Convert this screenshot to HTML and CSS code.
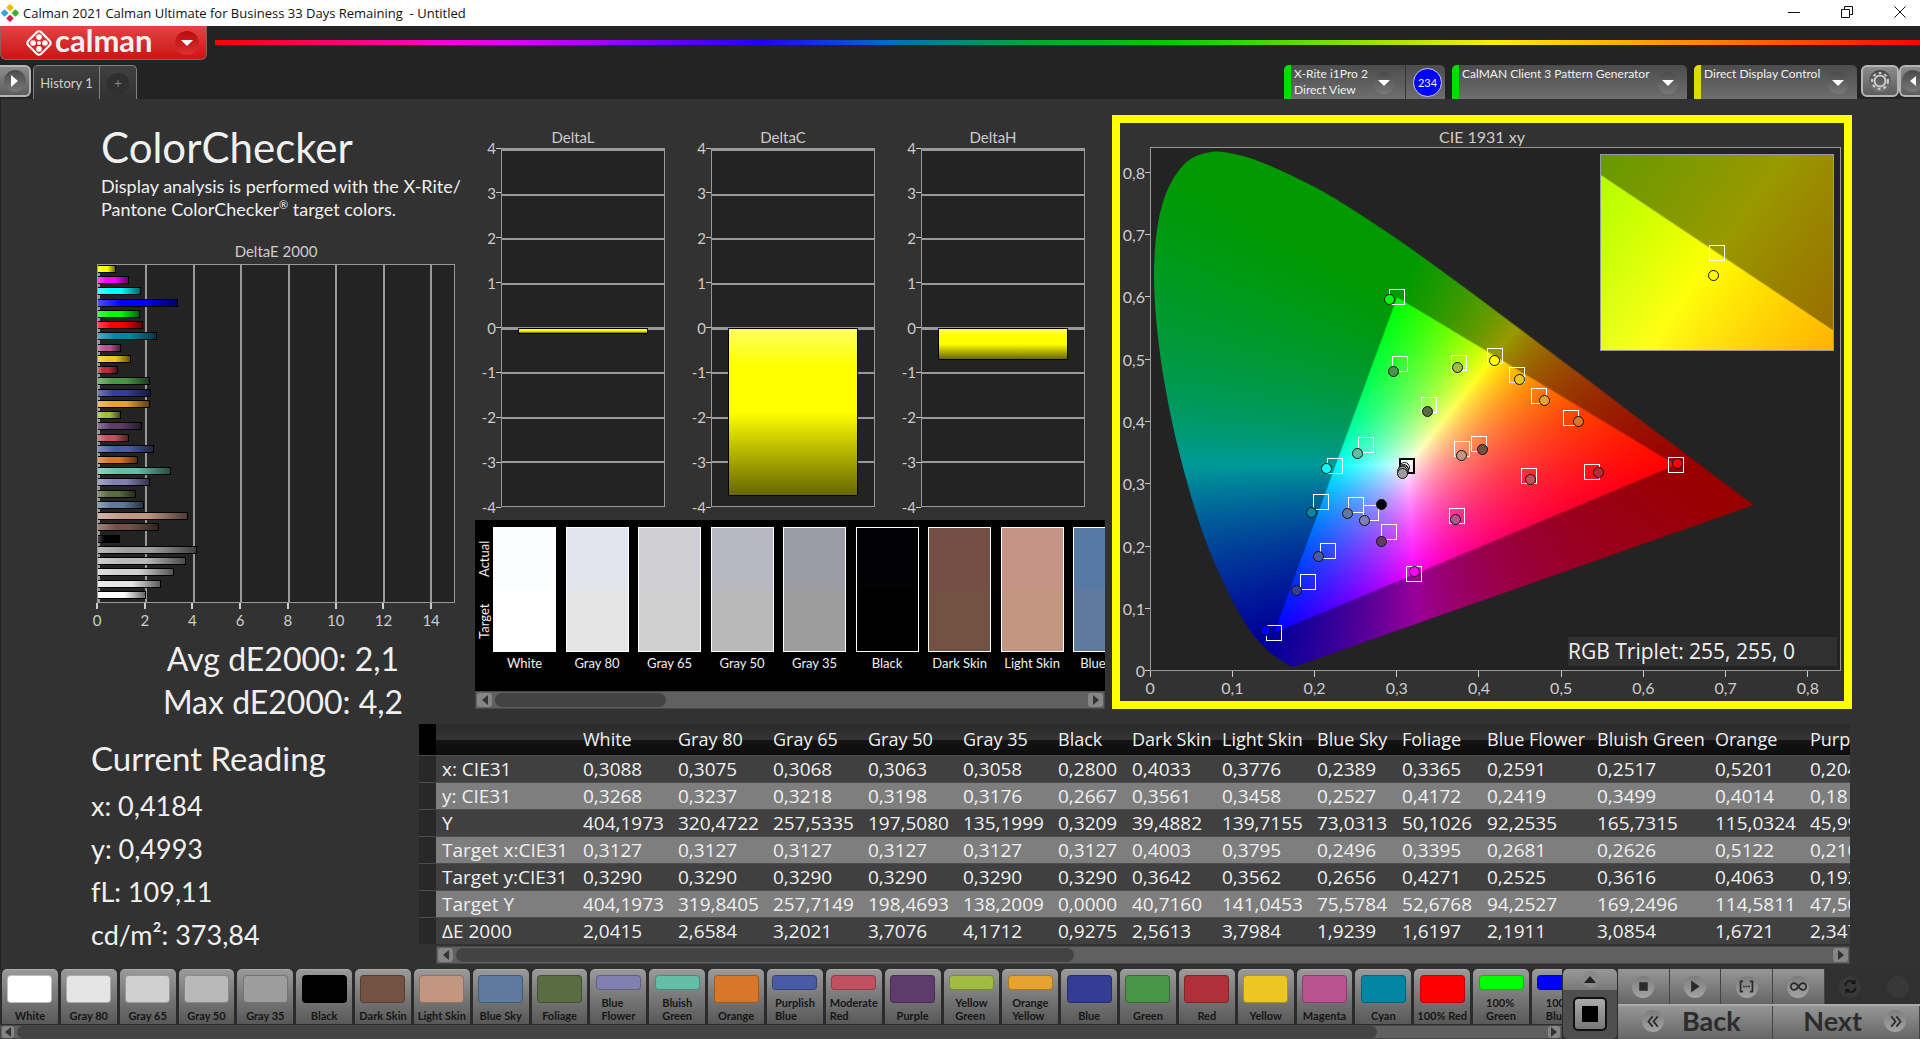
FILE: index.html
```html
<!DOCTYPE html>
<html lang="en">
  <head>
    <meta charset="UTF-8" />
    <meta name="viewport" content="width=device-width, initial-scale=1.0" />
    <title>Calman 2021 - Untitled</title>
    <link rel="stylesheet" href="styles.css">
  </head>
  <body>
    <div class="title_bar">
      <svg class="app_icon" viewBox="0 0 20 20">
        <rect x="7" y="1" width="6" height="6" rx="1" fill="#f5b800" transform="rotate(45 10 4)" />
        <rect x="1" y="7" width="6" height="6" rx="1" fill="#3aa5dc" transform="rotate(45 4 10)" />
        <rect x="13" y="7" width="6" height="6" rx="1" fill="#3fae2a" transform="rotate(45 16 10)" />
        <rect x="7" y="13" width="6" height="6" rx="1" fill="#d81e4a" transform="rotate(45 10 16)" />
      </svg>
      <span class="window_title">Calman 2021 Calman Ultimate for Business 33 Days Remaining &nbsp;- Untitled</span>
      <button class="window_button" aria-label="Minimize">
        <svg viewBox="0 0 12 12"><path d="M0 6.5h12" /></svg>
      </button>
      <button class="window_button" aria-label="Restore">
        <svg viewBox="0 0 12 12"><path d="M.5 3.5h8v8h-8zM3.5 3V.5h8v8H9" /></svg>
      </button>
      <button class="window_button" aria-label="Close">
        <svg viewBox="0 0 12 12"><path d="M.5.5l11 11M11.5.5l-11 11" /></svg>
      </button>
    </div>

    <header class="brand_row">
      <button class="brand">
        <svg class="brand_mark" viewBox="0 0 26 26">
          <rect x="4.500" y="4.500" width="17" height="17" rx="3" transform="rotate(45 13 13)" />
          <circle cx="13" cy="7.500" r="2.600" />
          <circle cx="7.500" cy="13" r="2.600" />
          <circle cx="18.500" cy="13" r="2.600" />
          <circle cx="13" cy="18.500" r="2.600" />
          <circle cx="13" cy="13" r="1.900" />
        </svg>
        <span class="brand_name">calman</span>
        <span class="brand_arrow"><i class="arrow_down"></i></span>
      </button>
      <div class="rainbow"></div>
    </header>

    <nav class="tab_row">
      <button class="side_button side_left" aria-label="Open panel"><span class="round"><i class="arrow_right"></i></span></button>
      <div class="tabs">
        <button class="tab">History 1</button>
        <button class="tab tab_add" aria-label="Add tab"><span>+</span></button>
      </div>
      <div class="devices">
        <div class="device device_meter">
          <button class="device_name green">X-Rite i1Pro 2<br />Direct View</button>
          <span class="round"><i class="arrow_down"></i></span>
          <button class="meter_count"><span>234</span></button>
        </div>
        <div class="device device_source">
          <button class="device_name green">CalMAN Client 3 Pattern Generator</button>
          <span class="round"><i class="arrow_down"></i></span>
        </div>
        <div class="device device_display">
          <button class="device_name yellow">Direct Display Control</button>
          <span class="round"><i class="arrow_down"></i></span>
        </div>
      </div>
      <button class="side_button" aria-label="Settings">
        <span class="round">
          <svg class="gear" viewBox="0 0 20 20">
            <circle cx="10" cy="10" r="5.500" />
            <circle class="teeth" cx="10" cy="10" r="8" />
          </svg>
        </span>
      </button>
      <button class="side_button side_right" aria-label="Close panel"><span class="round"><i class="arrow_left"></i></span></button>
    </nav>

    <main>
      <div class="analysis">
        <section class="summary">
          <h1>ColorChecker</h1>
          <p class="description">Display analysis is performed with the X-Rite/<br />Pantone ColorChecker<sup>®</sup> target colors.</p>
          <h2 class="chart_title">DeltaE 2000</h2>
          <div class="de_plot" id="dePlot"></div>
          <div class="de_axis">
            <span>0</span><span>2</span><span>4</span><span>6</span><span>8</span><span>10</span><span>12</span><span>14</span>
          </div>
          <p class="totals">Avg dE2000: 2,1<br />Max dE2000: 4,2</p>
        </section>

        <section class="middle">
          <div class="deltas" id="deltas"></div>
          <div class="compare">
            <div class="compare_body">
              <div class="compare_side"><span>Actual</span><span>Target</span></div>
              <div class="compare_list" id="compareList"></div>
            </div>
            <div class="scrollbar">
              <button aria-label="Scroll left"><i class="arrow_left"></i></button>
              <div class="track"><div class="thumb thumb_compare"></div></div>
              <button aria-label="Scroll right"><i class="arrow_right"></i></button>
            </div>
          </div>
        </section>

        <section class="cie">
          <h2 class="chart_title">CIE 1931 xy</h2>
          <div class="cie_chart">
            <div class="cie_y">
              <span>0,8</span><span>0,7</span><span>0,6</span><span>0,5</span><span>0,4</span><span>0,3</span><span>0,2</span><span>0,1</span><span>0</span>
            </div>
            <div class="cie_plot" id="ciePlot">
              <canvas id="cieCanvas" width="690" height="523"></canvas>
              <div class="cie_inset" id="cieInset">
                <canvas id="insetCanvas" width="230" height="194"></canvas>
              </div>
              <div class="triplet">RGB Triplet: 255, 255, 0</div>
            </div>
            <div class="cie_x">
              <span>0</span><span>0,1</span><span>0,2</span><span>0,3</span><span>0,4</span><span>0,5</span><span>0,6</span><span>0,7</span><span>0,8</span>
            </div>
          </div>
        </section>
      </div>

      <div class="results">
        <section class="reading">
          <h2>Current Reading</h2>
          <p>x: 0,4184</p>
          <p>y: 0,4993</p>
          <p>fL: 109,11</p>
          <p>cd/m²: 373,84</p>
        </section>

        <section class="data">
          <div class="table_clip">
            <table>
              <colgroup>
                <col class="c_mark"><col class="c_label">
                <col span="5" class="c_gray">
                <col class="c_black"><col class="c_dark"><col class="c_gray">
                <col span="2" class="c_sky">
                <col class="c_flower"><col class="c_bluish">
                <col span="2" class="c_gray">
              </colgroup>
              <thead>
                <tr><th></th><th></th><th>White</th><th>Gray 80</th><th>Gray 65</th><th>Gray 50</th><th>Gray 35</th><th>Black</th><th>Dark Skin</th><th>Light Skin</th><th>Blue Sky</th><th>Foliage</th><th>Blue Flower</th><th>Bluish Green</th><th>Orange</th><th>Purplish Blue</th></tr>
              </thead>
              <tbody>
                <tr><td></td><th>x: CIE31</th><td>0,3088</td><td>0,3075</td><td>0,3068</td><td>0,3063</td><td>0,3058</td><td>0,2800</td><td>0,4033</td><td>0,3776</td><td>0,2389</td><td>0,3365</td><td>0,2591</td><td>0,2517</td><td>0,5201</td><td>0,204</td></tr>
                <tr><td></td><th>y: CIE31</th><td>0,3268</td><td>0,3237</td><td>0,3218</td><td>0,3198</td><td>0,3176</td><td>0,2667</td><td>0,3561</td><td>0,3458</td><td>0,2527</td><td>0,4172</td><td>0,2419</td><td>0,3499</td><td>0,4014</td><td>0,18</td></tr>
                <tr><td></td><th>Y</th><td>404,1973</td><td>320,4722</td><td>257,5335</td><td>197,5080</td><td>135,1999</td><td>0,3209</td><td>39,4882</td><td>139,7155</td><td>73,0313</td><td>50,1026</td><td>92,2535</td><td>165,7315</td><td>115,0324</td><td>45,99</td></tr>
                <tr><td></td><th>Target x:CIE31</th><td>0,3127</td><td>0,3127</td><td>0,3127</td><td>0,3127</td><td>0,3127</td><td>0,3127</td><td>0,4003</td><td>0,3795</td><td>0,2496</td><td>0,3395</td><td>0,2681</td><td>0,2626</td><td>0,5122</td><td>0,210</td></tr>
                <tr><td></td><th>Target y:CIE31</th><td>0,3290</td><td>0,3290</td><td>0,3290</td><td>0,3290</td><td>0,3290</td><td>0,3290</td><td>0,3642</td><td>0,3562</td><td>0,2656</td><td>0,4271</td><td>0,2525</td><td>0,3616</td><td>0,4063</td><td>0,192</td></tr>
                <tr><td></td><th>Target Y</th><td>404,1973</td><td>319,8405</td><td>257,7149</td><td>198,4693</td><td>138,2009</td><td>0,0000</td><td>40,7160</td><td>141,0453</td><td>75,5784</td><td>52,6768</td><td>94,2527</td><td>169,2496</td><td>114,5811</td><td>47,50</td></tr>
                <tr><td></td><th>ΔE 2000</th><td>2,0415</td><td>2,6584</td><td>3,2021</td><td>3,7076</td><td>4,1712</td><td>0,9275</td><td>2,5613</td><td>3,7984</td><td>1,9239</td><td>1,6197</td><td>2,1911</td><td>3,0854</td><td>1,6721</td><td>2,347</td></tr>
              </tbody>
            </table>
          </div>
          <div class="scrollbar scrollbar_table">
            <button aria-label="Scroll left"><i class="arrow_left"></i></button>
            <div class="track"><div class="thumb thumb_table"></div></div>
            <button aria-label="Scroll right"><i class="arrow_right"></i></button>
          </div>
        </section>
      </div>
    </main>

    <footer>
      <div class="patches">
        <div class="patch_list" id="patchList"></div>
        <div class="scrollbar scrollbar_thin">
          <button aria-label="Scroll left"><i class="arrow_left"></i></button>
          <div class="track"><div class="thumb thumb_patches"></div></div>
          <button aria-label="Scroll right"><i class="arrow_right"></i></button>
        </div>
      </div>
      <div class="pattern">
        <button class="pattern_up" aria-label="Show patterns"><span class="round"><i class="arrow_up"></i></span></button>
        <button class="pattern_window" aria-label="Pattern window"><i></i></button>
      </div>
      <div class="transport">
        <div class="transport_row">
          <button aria-label="Stop"><span class="round"><svg viewBox="0 0 20 20"><path d="M5 5h10v10H5z" /></svg></span></button>
          <button aria-label="Play"><span class="round"><svg viewBox="0 0 20 20"><path d="M6 3l10 7-10 7z" /></svg></span></button>
          <button aria-label="Read series"><span class="round"><svg class="line" viewBox="0 0 20 20"><path d="M6 4H3v12h3M14 4h3v12h-3M6 10h2M9 10h2M12 10h2" /></svg></span></button>
          <button aria-label="Continuous"><span class="round"><svg class="line" viewBox="0 0 20 20"><path d="M10 10c-2-3-3-4-5-4a4 4 0 0 0 0 8c2 0 3-1 5-4s3-4 5-4a4 4 0 0 1 0 8c-2 0-3-1-5-4z" /></svg></span></button>
          <button class="off" aria-label="Refresh" disabled><span class="round"><svg class="line" viewBox="0 0 20 20"><path d="M4 9a6 6 0 0 1 11-3M16 11a6 6 0 0 1-11 3M15 2v4h-4M5 18v-4h4" /></svg></span></button>
          <button class="off" aria-label="Record" disabled><span class="round"></span></button>
        </div>
        <div class="step_row">
          <button class="back"><span class="round"><svg class="line" viewBox="0 0 20 20"><path d="M9 4l-5 6 5 6M15 4l-5 6 5 6" /></svg></span>Back</button>
          <button class="next">Next<span class="round"><svg class="line" viewBox="0 0 20 20"><path d="M5 4l5 6-5 6M11 4l5 6-5 6" /></svg></span></button>
        </div>
      </div>
    </footer>

    <script src="script.js"></script>
  </body>
</html>
```
FILE: styles.css
```css
* {
  box-sizing: border-box;
}
body {
  margin: 0;
  min-height: 100vh;
  display: flex;
  flex-direction: column;
  background: #323232;
  color: #f0f0f0;
  font-family: "Lato", sans-serif;
  overflow: hidden;
}
button {
  margin: 0;
  padding: 0;
  border: none;
  background: none;
  color: inherit;
  font: inherit;
  cursor: pointer;
}
h1,
h2,
p {
  margin: 0;
  font-weight: 400;
}

/* arrows */
.arrow_down,
.arrow_up,
.arrow_left,
.arrow_right {
  display: block;
  border: 5px solid transparent;
}
.arrow_down {
  border-width: 6px 6px 0;
  border-top-color: #fff;
}
.arrow_up {
  border-width: 0 6px 7px;
  border-bottom-color: #222;
}
.arrow_left {
  border-width: 5px 6px 5px 0;
  border-right-color: #fff;
}
.arrow_right {
  border-width: 6px 0 6px 7px;
  border-left-color: #fff;
}
.round {
  display: flex;
  flex: none;
  align-items: center;
  justify-content: center;
  width: 22px;
  height: 22px;
  border-radius: 50%;
  background: linear-gradient(#4a4a4a, #787878);
}

/* title bar */
.title_bar {
  display: flex;
  align-items: center;
  height: 26px;
  background: #fff;
  color: #111;
  font-family: "Open Sans", sans-serif;
  font-size: 13px;
}
.app_icon {
  width: 18px;
  height: 18px;
  margin: 0 4px 0 1px;
}
.window_title {
  flex: 1;
}
.window_button {
  width: 53px;
  height: 26px;
}
.window_button:last-child {
  width: 40px;
  margin-left: 7px;
}
.window_button svg {
  width: 12px;
  height: 12px;
  fill: none;
  stroke: #111;
}

/* brand */
.brand_row {
  display: flex;
  height: 39px;
  background: #232323;
}
.brand {
  display: flex;
  align-items: center;
  width: 207px;
  height: 34px;
  padding: 0 7px 0 24px;
  border: 1px solid #8a6060;
  border-top: none;
  border-radius: 0 0 6px 6px;
  background: linear-gradient(#e24444, #cc1414);
}
.brand_mark {
  width: 28px;
  height: 28px;
  fill: #fff;
}
.brand_mark rect {
  fill: none;
  stroke: #fff;
  stroke-width: 2;
}
.brand_name {
  flex: 1;
  padding: 0 0 6px 2px;
  font-size: 31px;
  font-weight: 700;
  line-height: 28px;
  text-align: left;
}
.brand_arrow {
  display: flex;
  align-items: center;
  justify-content: center;
  width: 24px;
  height: 24px;
  border-radius: 50%;
  background: linear-gradient(#b80c0c, #dc3030);
}
.rainbow {
  flex: 1;
  height: 5px;
  margin: 14px 0 0 8px;
  background: linear-gradient(to right, #f00, #f0c 13%, #d0f 18%, #20f 32%, #06c 39%, #0a3 48%, #0c0 56%, #6d0 64%, #fe0 75%, #f80 87%, #f00);
}

/* tabs */
.tab_row {
  display: flex;
  align-items: flex-start;
  height: 34px;
  background: #232323;
}
.side_button {
  display: flex;
  align-items: center;
  justify-content: center;
  width: 38px;
  height: 32px;
  border: 2px solid #b4b4b4;
  border-radius: 6px;
  background: linear-gradient(#8c8c8c, #5c5c5c);
}
.side_left {
  width: 31px;
  border-left: none;
  border-radius: 0 6px 6px 0;
}
.side_right {
  width: 21px;
  border-right: none;
  border-radius: 6px 0 0 6px;
  overflow: hidden;
}
.side_right .round {
  margin-left: 5px;
}
.tabs {
  display: flex;
  height: 34px;
  margin-left: 2px;
  border: 1px solid #808080;
  border-bottom: none;
  border-radius: 5px 5px 0 0;
  background: linear-gradient(#404040, #323232);
}
.tab {
  width: 65px;
  color: #d0d0d0;
  font-size: 13px;
}
.tab_add {
  width: 37px;
  border-left: 1px solid #808080;
}
.tab_add span {
  display: block;
  width: 22px;
  height: 22px;
  margin: 3px auto 0;
  border-radius: 50%;
  background: #303030;
  color: #888;
  line-height: 20px;
}
.devices {
  display: flex;
  flex: 1;
  justify-content: flex-end;
  gap: 7px;
  margin-right: 4px;
}
.device {
  display: flex;
  height: 34px;
  padding-right: 8px;
  border-radius: 5px 5px 0 0;
  background: linear-gradient(#4c4c4c, #6e6e6e);
  overflow: hidden;
}
.device_meter {
  width: 161px;
  padding-right: 3px;
}
.device_source {
  width: 235px;
}
.device_display {
  width: 163px;
}
.device_name {
  flex: 1;
  padding: 1px 0 0 3px;
  border-left: 7px solid #0d0;
  font-size: 12px;
  line-height: 16px;
  text-align: left;
  white-space: nowrap;
  align-self: stretch;
  display: flex;
}
.device_name.yellow {
  border-left-color: #dd0;
}
.device .round {
  align-self: center;
  margin-top: 1px;
}
.meter_count {
  margin-left: 10px;
  padding-left: 7px;
  border-left: 1px solid #333;
}
.meter_count span {
  display: block;
  width: 29px;
  height: 29px;
  border: 1px solid #ccd;
  border-radius: 50%;
  background: #00f;
  font-size: 11px;
  line-height: 27px;
}
.gear {
  width: 20px;
  height: 20px;
  fill: none;
  stroke: #ccc;
  stroke-width: 2;
}
.gear .teeth {
  stroke-width: 2;
  stroke-dasharray: 3 3;
}

/* main area */
main {
  flex: 1;
  border-left: 1px solid #222;
}
.analysis {
  display: grid;
  grid-template-columns: minmax(0, 474fr) minmax(0, 637fr) minmax(0, 740fr);
  height: 625px;
  padding-right: 68px;
}
.chart_title {
  color: #ccc;
  font-size: 15px;
  line-height: 20px;
  text-align: center;
}
.summary {
  padding: 21px 20px 0 96px;
}
.summary h1 {
  padding-left: 4px;
  font-size: 42px;
  line-height: 54px;
}
.description {
  padding: 1px 0 20px 4px;
  font-size: 18px;
  line-height: 23px;
  white-space: nowrap;
}
.description sup {
  font-size: 11px;
  line-height: 0;
}
.summary .chart_title {
  height: 23px;
}
.de_plot {
  display: grid;
  grid-auto-rows: 1fr;
  align-items: start;
  height: 339px;
  border: 1px solid #999;
  background: repeating-linear-gradient(to right, #999 0 2px, #232323 2px 13.333%);
}
.de_bar {
  height: 8px;
  border: 1px solid #000;
  border-left: none;
  background-image: linear-gradient(to right, rgba(255, 255, 255, 0.3), transparent 30%, transparent 55%, rgba(0, 0, 0, 0.6));
}
.de_axis {
  display: grid;
  grid-template-columns: repeat(8, 1fr);
  margin-left: -6.667%;
  color: #ccc;
  font-size: 15px;
  line-height: 22px;
  text-align: center;
}
.de_axis span::before {
  content: "";
  display: block;
  width: 2px;
  height: 6px;
  margin: 0 auto;
  background: #ccc;
}
.totals {
  padding: 6px 0 0 14px;
  font-size: 32px;
  line-height: 43px;
  text-align: center;
}

.middle {
  padding-right: 7px;
}
.deltas {
  display: grid;
  grid-template-columns: repeat(3, 1fr);
  gap: 26px;
  padding: 28px 20px 0 6px;
}
.delta_body {
  display: flex;
}
.delta_axis {
  display: flex;
  flex-direction: column;
  justify-content: space-between;
  width: 20px;
  height: 379px;
  margin-bottom: -10px;
  color: #ccc;
  font-size: 15px;
  line-height: 20px;
}
.delta_axis span {
  display: flex;
  align-items: center;
  justify-content: flex-end;
}
.delta_axis span::after {
  content: "";
  width: 5px;
  height: 1px;
  background: #ccc;
}
.delta_title {
  height: 11px;
  line-height: 20px;
}
.delta_plot {
  flex: 1;
  height: 359px;
  margin-top: 10px;
  border: 1px solid #999;
  background: repeating-linear-gradient(#999 0 2px, #232323 2px 12.5%);
}
.delta_plot::before {
  content: "";
  display: block;
  height: 50%;
}
.delta_bar {
  width: 80%;
  margin: 0 auto;
  border: 1px solid #000;
  background: linear-gradient(#ff6, #ff0 22%, #ff0 50%, #660);
}

.compare {
  margin-top: 13px;
}
.compare_body {
  display: flex;
  height: 171px;
  background: #000;
}
.compare_side {
  display: flex;
  flex-direction: row-reverse;
  justify-content: space-around;
  width: 18px;
  height: 125px;
  margin-top: 7px;
  font-size: 13px;
  writing-mode: vertical-rl;
  transform: rotate(180deg);
  line-height: 18px;
}
.compare_list {
  display: flex;
  flex: 1;
  gap: 1.55%;
  padding-top: 7px;
  overflow: hidden;
}
.compare_item {
  flex: 0 0 10.3%;
  font-size: 13px;
  line-height: 22px;
  text-align: center;
  white-space: nowrap;
}
.compare_color {
  height: 125px;
  border: 1px solid #fff;
}

.scrollbar {
  display: flex;
  align-items: center;
  height: 18px;
  padding: 0 1px;
  border: 1px solid #484848;
  background: #606060;
}
.scrollbar button {
  display: flex;
  align-items: center;
  justify-content: center;
  width: 15px;
  height: 14px;
  border-radius: 3px;
  background: #868686;
}
.scrollbar .arrow_left {
  border-width: 5px 6px 5px 0;
  border-right-color: #333;
}
.scrollbar .arrow_right {
  border-width: 5px 0 5px 6px;
  border-left-color: #333;
}
.track {
  flex: 1;
  padding: 0 3px;
}
.thumb {
  height: 14px;
  border-radius: 7px;
  background: #434343;
}
.thumb_compare {
  width: 29%;
}
.thumb_table {
  width: 45%;
}
.thumb_patches {
  width: 89%;
}

.cie {
  margin: 16px 0 15px;
  padding-top: 4px;
  border: 8px solid #ff0;
}
.cie .chart_title {
  font-size: 16px;
}
.cie_chart {
  display: grid;
  grid-template-columns: 30px 1fr;
  padding-right: 3px;
}
.cie_y {
  display: grid;
  grid-auto-rows: 1fr;
  align-items: center;
  margin: -6px 0 -31px;
  color: #ccc;
  font-size: 16px;
  text-align: right;
}
.cie_y span {
  display: flex;
  align-items: center;
  justify-content: flex-end;
}
.cie_y span::after {
  content: "";
  width: 5px;
  height: 1px;
  background: #ccc;
}
.cie_plot {
  position: relative;
  height: 524px;
  border: 1px solid #999;
  background: #232323;
}
.cie_plot canvas {
  display: block;
  width: 100%;
  height: 100%;
}
.cie_x {
  grid-column: 2;
  display: grid;
  grid-template-columns: repeat(9, 1fr);
  margin: 0 -8px 0 -41px;
  color: #ccc;
  font-size: 16px;
  line-height: 22px;
  text-align: center;
}
.cie_x span::before {
  content: "";
  display: block;
  width: 1px;
  height: 6px;
  margin: 0 auto;
  background: #ccc;
}
.marker_target,
.marker_actual {
  position: absolute;
  width: 16px;
  height: 16px;
  margin: -8px;
  border: 1px solid #fff;
}
.marker_target.black {
  border: 2px solid #000;
}
.marker_actual {
  width: 11px;
  height: 11px;
  margin: -5px;
  border: 1px solid #111;
  border-radius: 50%;
}
.cie_inset {
  position: absolute;
  top: 6px;
  right: 6px;
  width: 34%;
  height: 197px;
  border: 1px solid #999;
}
.triplet {
  position: absolute;
  right: 3px;
  bottom: 4px;
  width: 269px;
  background: #303030;
  font-family: "Open Sans", sans-serif;
  font-size: 21px;
  line-height: 29px;
}

/* readings and table */
.results {
  display: flex;
  height: 245px;
  padding-right: 70px;
}
.reading {
  width: 418px;
  padding: 13px 0 0 90px;
  font-size: 27px;
  line-height: 43px;
}
.reading h2 {
  padding-bottom: 4px;
  font-size: 33px;
  line-height: 43px;
}
.data {
  flex: 1;
  min-width: 0;
}
.table_clip {
  overflow: hidden;
}
table {
  width: 1480px;
  border-collapse: collapse;
  table-layout: fixed;
  font-family: "Open Sans", sans-serif;
  font-size: 19px;
  line-height: 26px;
}
th,
td {
  height: 27px;
  padding: 0 6px;
  font-weight: 400;
  text-align: left;
  white-space: nowrap;
}
thead th {
  height: 31px;
  font-size: 18px;
  background: linear-gradient(#2a2a2a, #343434 50%, #141414 50%, #0c0c0c);
}
thead th:first-child {
  background: #000;
}
tbody tr {
  background: #404040;
  border-top: 1px solid #4c4c4c;
}
tbody tr:nth-child(even) {
  background: #7e7e7e;
}
tbody td:first-child {
  background: #282828;
}
.c_mark {
  width: 17px;
}
.c_label {
  width: 141px;
}
.c_gray {
  width: 95px;
}
.c_black {
  width: 74px;
}
.c_dark {
  width: 90px;
}
.c_sky {
  width: 85px;
}
.c_flower {
  width: 110px;
}
.c_bluish {
  width: 118px;
}
.scrollbar_table {
  margin: 2px 0 0 17px;
}

/* bottom bar */
footer {
  display: flex;
  height: 70px;
  background: #2c2c2c;
}
.patches {
  flex: 1;
  min-width: 0;
}
.patch_list {
  display: flex;
  gap: 3px;
  height: 56px;
  padding-left: 2px;
  overflow: hidden;
}
.patch {
  display: flex;
  flex: 0 0 3.58%;
  flex-direction: column;
  align-items: center;
  height: 55px;
  padding: 5px 0 2px;
  border-top: 1px solid #aaa;
  border-radius: 5px 5px 0 0;
  background: linear-gradient(#999, #585858);
  color: #161616;
  font-size: 11px;
  font-weight: 700;
  line-height: 13px;
  white-space: nowrap;
}
.patch_color {
  flex: 1;
  width: 45px;
  margin-bottom: 6px;
  border-radius: 4px;
  border: 1px solid rgba(0, 0, 0, 0.25);
}
.patch_name {
  display: block;
  text-align: left;
}
.scrollbar_thin {
  height: 14px;
}
.scrollbar_thin button {
  width: 12px;
  height: 12px;
}
.scrollbar_thin .thumb {
  height: 12px;
}
.pattern {
  display: flex;
  flex-direction: column;
  align-items: center;
  width: 54px;
  margin: 0 1px;
  background: #4e4e4e;
  border-radius: 5px;
}
.pattern_up {
  width: 100%;
  height: 21px;
  border-radius: 5px 5px 0 0;
  background: linear-gradient(#999, #777);
}
.pattern_up .round {
  width: 17px;
  height: 17px;
  margin: 0 auto;
  background: #8a8a8a;
}
.pattern_window {
  display: flex;
  align-items: center;
  justify-content: center;
  width: 34px;
  height: 34px;
  margin-top: 7px;
  border: 2px solid #111;
  border-radius: 5px;
  background: linear-gradient(#aaa, #777);
}
.pattern_window i {
  width: 16px;
  height: 16px;
  background: #000;
}
.transport {
  width: 302px;
}
.transport_row {
  display: grid;
  grid-template-columns: repeat(5, 52fr) 44fr;
  height: 35px;
}
.transport_row button,
.step_row button {
  display: flex;
  align-items: center;
  justify-content: center;
  border-right: 1px solid #444;
  background: linear-gradient(#969696, #666);
}
.transport_row .off {
  border: none;
  background: #303030;
}
.transport .round {
  background: linear-gradient(#7c7c7c, #a4a4a4);
}
.transport .off .round {
  background: #383838;
}
.transport svg {
  width: 17px;
  height: 17px;
  fill: #2a2a2a;
}
.transport svg.line {
  fill: none;
  stroke: #2a2a2a;
  stroke-width: 2;
}
.transport .off svg {
  stroke: #161616;
}
.step_row {
  display: grid;
  grid-template-columns: 155fr 147fr;
  height: 35px;
  border-top: 2px solid #aaa;
  color: #2c2c2c;
  font-size: 27px;
  font-weight: 700;
}
.step_row button {
  line-height: 28px;
  padding-bottom: 3px;
}
.step_row .back {
  justify-content: flex-start;
  gap: 18px;
  padding-left: 24px;
}
.step_row .next {
  justify-content: flex-end;
  gap: 22px;
  padding-right: 13px;
}
```
FILE: script.js
```js
// name, color, measured color, deltaE, target x/y, actual x/y
const patches = [
  ["White", "#ffffff", "#fafeff", 2.04, 0.3127, 0.329, 0.3088, 0.3268],
  ["Gray 80", "#e5e5e5", "#e2e5ee", 2.66, 0.3127, 0.329, 0.3075, 0.3237],
  ["Gray 65", "#d0d0d0", "#cfcfd4", 3.2, 0.3127, 0.329, 0.3068, 0.3218],
  ["Gray 50", "#b9b9b9", "#b8b8c2", 3.71, 0.3127, 0.329, 0.3063, 0.3198],
  ["Gray 35", "#9d9d9d", "#9c9ca6", 4.17, 0.3127, 0.329, 0.3058, 0.3176],
  ["Black", "#000000", "#020204", 0.93, 0.3127, 0.329, 0.28, 0.2667],
  ["Dark Skin", "#735244", "#754f45", 2.56, 0.4003, 0.3642, 0.4033, 0.3561],
  ["Light Skin", "#c39682", "#c69486", 3.8, 0.3795, 0.3562, 0.3776, 0.3458],
  ["Blue Sky", "#5e7b9d", "#567aa4", 1.92, 0.2496, 0.2656, 0.2389, 0.2527],
  ["Foliage", "#596c42", "#586c46", 1.62, 0.3395, 0.4271, 0.3365, 0.4172],
  ["Blue<br>Flower", "#8280b1", "#7d80b5", 2.19, 0.2681, 0.2525, 0.2591, 0.2419],
  ["Bluish<br>Green", "#63bda7", "#5fbdae", 3.09, 0.2626, 0.3616, 0.2517, 0.3499],
  ["Orange", "#d97728", "#dc742c", 1.67, 0.5122, 0.4063, 0.5201, 0.4014],
  ["Purplish<br>Blue", "#4a5ba5", "#445bac", 2.35, 0.2156, 0.1917, 0.203, 0.183],
  ["Moderate<br>Red", "#c25160", "#c64f62", 1.3, 0.4613, 0.3127, 0.4625, 0.3078],
  ["Purple", "#5d3c6b", "#5c3b70", 1.85, 0.29, 0.222, 0.2805, 0.208],
  ["Yellow<br>Green", "#a0bc41", "#9fbc45", 0.95, 0.375, 0.4945, 0.3727, 0.488],
  ["Orange<br>Yellow", "#e6a32d", "#e8a230", 2.2, 0.4726, 0.441, 0.4787, 0.4338],
  ["Blue", "#333d95", "#2d3d9b", 2.25, 0.191, 0.1417, 0.1766, 0.129],
  ["Green", "#489548", "#46954d", 2.2, 0.304, 0.492, 0.2948, 0.4807],
  ["Red", "#af3038", "#b32e39", 0.85, 0.5375, 0.318, 0.545, 0.318],
  ["Yellow", "#ecc723", "#edc62a", 1.4, 0.4466, 0.475, 0.4486, 0.469],
  ["Magenta", "#b85390", "#bb5193", 0.95, 0.3727, 0.248, 0.371, 0.2435],
  ["Cyan", "#0386a3", "#0086a9", 2.5, 0.207, 0.271, 0.1945, 0.255],
  ["100% Red", "#ff0000", "#ff0000", 1.9, 0.64, 0.33, 0.6407, 0.333],
  ["100%<br>Green", "#00ff00", "#00ff00", 1.75, 0.3, 0.6, 0.29, 0.597],
  ["100%<br>Blue", "#0000ff", "#0000ff", 3.35, 0.15, 0.06, 0.1392, 0.0643],
  ["100%<br>Cyan", "#00ffff", "#00ffff", 1.8, 0.2246, 0.3287, 0.2135, 0.3245],
  ["100%<br>Magenta", "#ff00ff", "#ff00ff", 1.3, 0.3209, 0.1542, 0.3209, 0.159],
  ["100%<br>Yellow", "#ffff00", "#ffff00", 0.75, 0.4193, 0.5053, 0.4184, 0.4993],
];

const dePlot = document.querySelector("#dePlot");
const compareList = document.querySelector("#compareList");
const patchList = document.querySelector("#patchList");

patches.forEach(([name, color, measured, de], i) => {
  dePlot.insertAdjacentHTML(
    "afterbegin",
    `<div class="de_bar" style="width:${(de / 15) * 100}%;background-color:${color}"></div>`
  );
  // only the patches in view are drawn
  if (i < 9) {
    compareList.insertAdjacentHTML(
      "beforeend",
      `<div class="compare_item">
        <div class="compare_color" style="background:linear-gradient(${measured} 50%, ${color} 50%)"></div>
        ${name}
      </div>`
    );
  }
  if (i < 27) {
    patchList.insertAdjacentHTML(
      "beforeend",
      `<button class="patch">
        <span class="patch_color" style="background:${color}"></span>
        <span class="patch_name">${name}</span>
      </button>`
    );
  }
});

// delta charts, all of them run from 4 to -4
const deltas = [["DeltaL", 0.15], ["DeltaC", 3.77], ["DeltaH", 0.73]];
for (const [name, drop] of deltas) {
  let labels = "";
  for (let i = 4; i >= -4; i--) {
    labels += `<span>${i}</span>`;
  }
  document.querySelector("#deltas").insertAdjacentHTML(
    "beforeend",
    `<div class="delta">
      <h2 class="chart_title delta_title">${name}</h2>
      <div class="delta_body">
        <div class="delta_axis">${labels}</div>
        <div class="delta_plot"><div class="delta_bar" style="height:${(drop / 8) * 100}%"></div></div>
      </div>
    </div>`
  );
}

// spectral locus
const locus = [
  [0.1741, 0.005], [0.1714, 0.0051], [0.1644, 0.0109], [0.1566, 0.0177],
  [0.144, 0.0297], [0.1241, 0.0578], [0.1096, 0.0868], [0.0913, 0.1327],
  [0.0687, 0.2007], [0.0454, 0.295], [0.0235, 0.4127], [0.0082, 0.5384],
  [0.0039, 0.6548], [0.0139, 0.7502], [0.0389, 0.812], [0.0743, 0.8338],
  [0.1142, 0.8262], [0.1547, 0.8059], [0.1929, 0.7816], [0.2296, 0.7543],
  [0.3016, 0.6923], [0.3731, 0.6245], [0.4441, 0.5547], [0.5125, 0.4866],
  [0.5752, 0.4242], [0.627, 0.3725], [0.6658, 0.334], [0.6915, 0.3083],
  [0.719, 0.2809], [0.7347, 0.2653],
];
const gamut = [[0.64, 0.33], [0.3, 0.6], [0.15, 0.06]];

function xyToRgb(x, y) {
  const X = x / y;
  const Z = (1 - x - y) / y;
  const rgb = [
    3.2406 * X - 1.5372 - 0.4986 * Z,
    -0.9689 * X + 1.8758 + 0.0415 * Z,
    0.0557 * X - 0.204 + 1.057 * Z,
  ];
  const max = Math.max(...rgb);
  return rgb.map((v) => (255 * Math.max(v, 0)) / max);
}

function drawCie(canvas, x0, x1, y0, y1) {
  const w = canvas.width;
  const h = canvas.height;
  const ctx = canvas.getContext("2d");
  const px = ([x, y]) => [((x - x0) / (x1 - x0)) * w, ((y1 - y) / (y1 - y0)) * h];

  function layer(level) {
    const c = document.createElement("canvas");
    c.width = w;
    c.height = h;
    const image = c.getContext("2d").createImageData(w, h);
    for (let j = 0; j < h; j++) {
      for (let i = 0; i < w; i++) {
        const x = x0 + ((i + 0.5) / w) * (x1 - x0);
        const y = y1 - ((j + 0.5) / h) * (y1 - y0);
        const [r, g, b] = xyToRgb(x, y);
        image.data.set([r * level, g * level, b * level, 255], (j * w + i) * 4);
      }
    }
    c.getContext("2d").putImageData(image, 0, 0);
    return c;
  }

  // smooth curve through the locus points
  const p = locus.map(px);
  ctx.save();
  ctx.beginPath();
  ctx.moveTo(...p[0]);
  for (let i = 0; i < p.length - 1; i++) {
    const a = p[Math.max(i - 1, 0)];
    const b = p[i];
    const c = p[i + 1];
    const d = p[Math.min(i + 2, p.length - 1)];
    ctx.bezierCurveTo(
      b[0] + (c[0] - a[0]) / 6, b[1] + (c[1] - a[1]) / 6,
      c[0] - (d[0] - b[0]) / 6, c[1] - (d[1] - b[1]) / 6,
      c[0], c[1]
    );
  }
  ctx.closePath();
  ctx.clip();
  ctx.drawImage(layer(0.6), 0, 0);
  ctx.restore();

  ctx.save();
  ctx.beginPath();
  gamut.map(px).forEach((q) => ctx.lineTo(...q));
  ctx.closePath();
  ctx.clip();
  ctx.drawImage(layer(1), 0, 0);
  ctx.restore();
}

function addMarker(plot, cls, color, x, y, x0, x1, y0, y1) {
  const left = ((x - x0) / (x1 - x0)) * 100;
  const top = ((y1 - y) / (y1 - y0)) * 100;
  plot.insertAdjacentHTML(
    "beforeend",
    `<i class="${cls}" style="left:${left}%;top:${top}%;background:${color}"></i>`
  );
}

const ciePlot = document.querySelector("#ciePlot");
const full = [0, 0.84, 0, 0.84];
drawCie(document.querySelector("#cieCanvas"), ...full);
patches.forEach(([name, color, measured, de, tx, ty], i) => {
  if (i == 0 || i > 5) {
    addMarker(ciePlot, i == 0 ? "marker_target black" : "marker_target", "none", tx, ty, ...full);
  }
});
for (const [name, color, measured, de, tx, ty, ax, ay] of patches) {
  addMarker(ciePlot, "marker_actual", color, ax, ay, ...full);
}

// close-up of the selected patch
const cieInset = document.querySelector("#cieInset");
const near = [0.3933, 0.4453, 0.4793, 0.5313];
drawCie(document.querySelector("#insetCanvas"), ...near);
addMarker(cieInset, "marker_target", "none", 0.4193, 0.5053, ...near);
addMarker(cieInset, "marker_actual", "#ffff00", 0.4184, 0.4993, ...near);
```
